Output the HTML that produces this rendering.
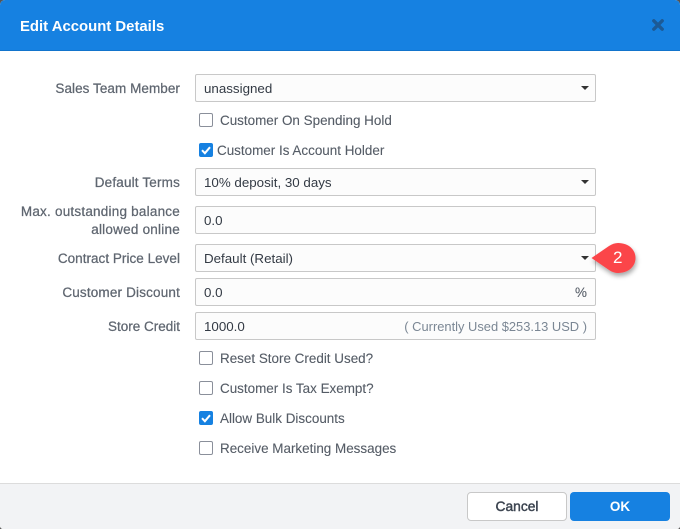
<!DOCTYPE html>
<html><head><meta charset="utf-8"><style>
html,body{margin:0;padding:0;width:680px;height:529px;overflow:hidden;background:#555}
#m{position:absolute;left:0;top:0;width:680px;height:529px;background:#fff;border-radius:5px 5px 3px 3px;overflow:hidden;font-family:"Liberation Sans",sans-serif;font-size:13px;color:#555c66}
#m div,#m svg{position:absolute;white-space:nowrap}
.hd{left:0;top:0;width:680px;height:51px;background:#1681e1;border-bottom:1px solid #1274cc;box-sizing:border-box}
.t{left:20px;top:18px;font-size:14.9px;font-weight:bold;color:#fff;line-height:18px}
.l{right:500px;font-size:13.5px;color:#5f6670;text-align:right;line-height:18px;-webkit-text-stroke:.25px #5f6670}
.f{left:195px;width:401px;height:28px;box-sizing:border-box;background:#fcfcfc;border:1px solid #c8c8c8;border-radius:2px;color:#333a44;line-height:28px;padding-left:8px;font-size:13.35px}
.c{left:199px;width:14px;height:14px;box-sizing:border-box;border:1px solid #8a8f9a;border-radius:2px;background:#fff}
.k{left:199px;width:14px;height:14px;background:#1681e1;border-radius:2px}
.k svg{left:0;top:0}
.x{font-size:13.45px;color:#555c66;line-height:18px;-webkit-text-stroke:.1px #555c66}
.a{left:581px;width:0;height:0;border-left:4.5px solid transparent;border-right:4.5px solid transparent;border-top:4.5px solid #333}
</style></head><body><div id="m">
<div class="hd"></div><div class="t">Edit Account Details</div>
<svg style="left:652px;top:19px" width="12" height="12" viewBox="0 0 12 12"><path d="M1.8 1.8L10.2 10.2M10.2 1.8L1.8 10.2" stroke="#1c5a96" stroke-width="3.4" stroke-linecap="round"/></svg>

<div class="l" style="top:80px;letter-spacing:.06px">Sales Team Member</div>
<div class="f" style="top:74px">unassigned</div><div class="a" style="top:86px"></div>
<div class="c" style="top:113px"></div><div class="x" style="left:220px;top:112px">Customer On Spending Hold</div>
<div class="k" style="top:143px"><svg width="14" height="14" viewBox="0 0 14 14"><path d="M3 7.2L5.9 10.2L11 4.2" fill="none" stroke="#fff" stroke-width="2"/></svg></div><div class="x" style="left:217px;top:142px">Customer Is Account Holder</div>

<div class="l" style="top:174px;letter-spacing:.17px">Default Terms</div>
<div class="f" style="top:168px">10% deposit, 30 days</div><div class="a" style="top:180px"></div>

<div class="l" style="top:203px;letter-spacing:.22px">Max. outstanding balance</div>
<div class="l" style="top:221px;letter-spacing:.23px">allowed online</div>
<div class="f" style="top:206px">0.0</div>

<div class="l" style="top:250px;letter-spacing:.03px">Contract Price Level</div>
<div class="f" style="top:244px">Default (Retail)</div><div class="a" style="top:256px"></div>

<div class="l" style="top:284px;letter-spacing:.17px">Customer Discount</div>
<div class="f" style="top:278px">0.0</div><div class="x" style="left:575px;top:284px;color:#555c66">%</div>

<div class="l" style="top:318px">Store Credit</div>
<div class="f" style="top:312px">1000.0</div><div class="x" style="right:93px;top:318px;color:#7b8794;font-size:12.9px;-webkit-text-stroke:0">( Currently Used $253.13 USD )</div>

<div class="c" style="top:351px"></div><div class="x" style="left:220px;top:350px">Reset Store Credit Used?</div>
<div class="c" style="top:381px"></div><div class="x" style="left:220px;top:380px">Customer Is Tax Exempt?</div>
<div class="k" style="top:411px"><svg width="14" height="14" viewBox="0 0 14 14"><path d="M3 7.2L5.9 10.2L11 4.2" fill="none" stroke="#fff" stroke-width="2"/></svg></div><div class="x" style="left:220px;top:410px">Allow Bulk Discounts</div>
<div class="c" style="top:441px"></div><div class="x" style="left:220px;top:440px">Receive Marketing Messages</div>

<svg style="left:588px;top:238px;overflow:visible" width="60" height="40" viewBox="0 0 60 40"><defs><filter id="s" x="-30%" y="-30%" width="160%" height="170%"><feDropShadow dx="1" dy="3" stdDeviation="2.5" flood-color="#000" flood-opacity=".35"/></filter></defs><path d="M3.5 20L21 8C24 6 27 5 30 5C41 5 47.500 12 47.500 20C47.500 28 41 35 30 35C27 35 24 34 21 32Z" fill="#fb4449" filter="url(#s)"/></svg>
<div style="left:613px;top:248px;color:#fff;font-size:17px;line-height:20px">2</div>

<div style="left:0;top:483px;width:680px;height:46px;background:#f2f3f5;border-top:1px solid #dcdcdc;box-sizing:border-box"></div>
<div style="left:467px;top:492px;width:100px;height:29px;box-sizing:border-box;background:#fff;border:1px solid #c8c8c8;border-radius:4px;text-align:center;line-height:27px;color:#3c4450;font-size:13.8px;-webkit-text-stroke:.45px #3c4450">Cancel</div>
<div style="left:570px;top:492px;width:100px;height:29px;background:#1681e1;border-radius:4px;text-align:center;line-height:29px;color:#fff;font-weight:bold;font-size:13.5px">OK</div>
</div></body></html>
